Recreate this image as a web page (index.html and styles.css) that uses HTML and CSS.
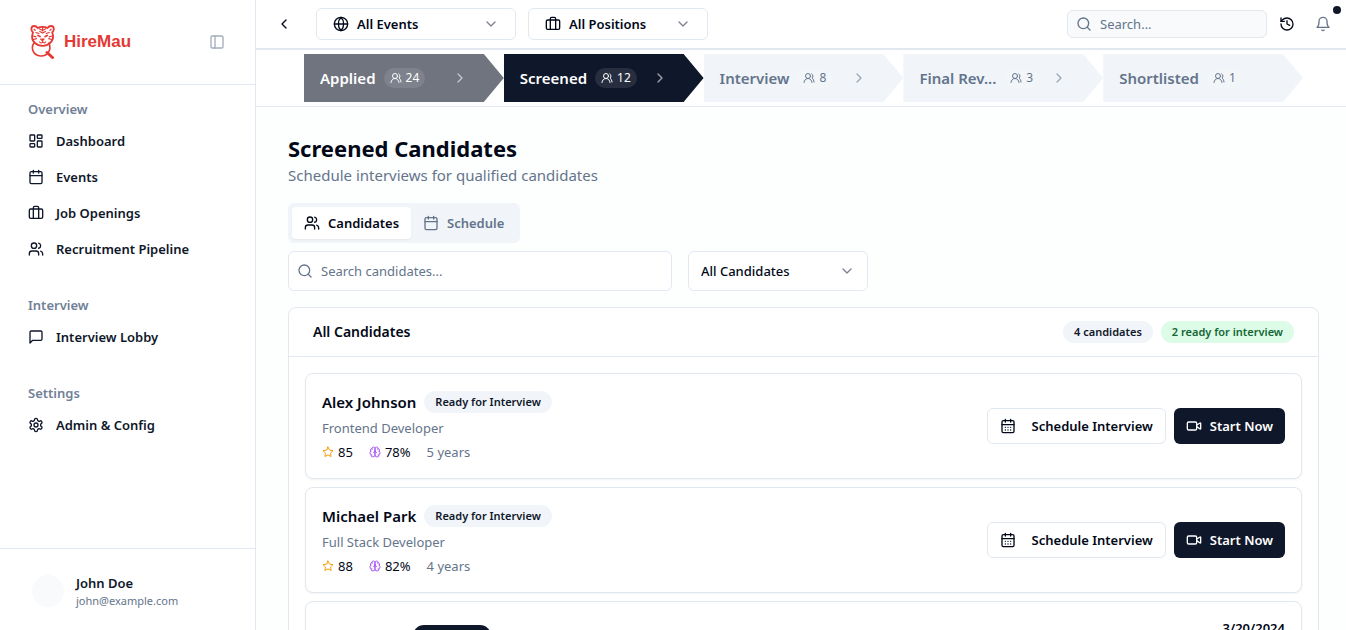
FILE: index.html
```html
<!DOCTYPE html>
<html lang="en">
<head>
<meta charset="utf-8">
<title>HireMau</title>
<link rel="stylesheet" href="styles.css">
</head>
<body>
<svg class="sprite" aria-hidden="true">
  <symbol id="users" viewBox="0 0 24 24"><path d="M16 21v-2a4 4 0 0 0-4-4H6a4 4 0 0 0-4 4v2"/><circle cx="9" cy="7" r="4"/><path d="M22 21v-2a4 4 0 0 0-3-3.87M16 3.13a4 4 0 0 1 0 7.75"/></symbol>
  <symbol id="users-round" viewBox="0 0 24 24"><path d="M18 21a8 8 0 0 0-16 0"/><circle cx="10" cy="8" r="5"/><path d="M22 20c0-3.37-2-6.5-4-8a5 5 0 0 0-.45-8.3"/></symbol>
  <symbol id="calendar" viewBox="0 0 24 24"><path d="M8 2v4M16 2v4M3 10h18"/><rect x="3" y="4" width="18" height="18" rx="2"/></symbol>
  <symbol id="calendar-days" viewBox="0 0 24 24"><path d="M8 2v4M16 2v4M3 10h18M8 14h.01M12 14h.01M16 14h.01M8 18h.01M12 18h.01M16 18h.01"/><rect x="3" y="4" width="18" height="18" rx="2"/></symbol>
  <symbol id="briefcase" viewBox="0 0 24 24"><path d="M16 20V4a2 2 0 0 0-2-2h-4a2 2 0 0 0-2 2v16"/><rect x="2" y="6" width="20" height="14" rx="2"/></symbol>
  <symbol id="dashboard" viewBox="0 0 24 24"><rect x="3" y="3" width="7" height="9" rx="1"/><rect x="14" y="3" width="7" height="5" rx="1"/><rect x="14" y="12" width="7" height="9" rx="1"/><rect x="3" y="16" width="7" height="5" rx="1"/></symbol>
  <symbol id="message" viewBox="0 0 24 24"><path d="M21 15a2 2 0 0 1-2 2H7l-4 4V5a2 2 0 0 1 2-2h14a2 2 0 0 1 2 2z"/></symbol>
  <symbol id="settings" viewBox="0 0 24 24"><path d="M12.22 2h-.44a2 2 0 0 0-2 2v.18a2 2 0 0 1-1 1.73l-.43.25a2 2 0 0 1-2 0l-.15-.08a2 2 0 0 0-2.73.73l-.22.38a2 2 0 0 0 .73 2.73l.15.1a2 2 0 0 1 1 1.72v.51a2 2 0 0 1-1 1.74l-.15.09a2 2 0 0 0-.73 2.73l.22.38a2 2 0 0 0 2.73.73l.15-.08a2 2 0 0 1 2 0l.43.25a2 2 0 0 1 1 1.73V20a2 2 0 0 0 2 2h.44a2 2 0 0 0 2-2v-.18a2 2 0 0 1 1-1.73l.43-.25a2 2 0 0 1 2 0l.15.08a2 2 0 0 0 2.73-.73l.22-.39a2 2 0 0 0-.73-2.73l-.15-.08a2 2 0 0 1-1-1.74v-.5a2 2 0 0 1 1-1.74l.15-.09a2 2 0 0 0 .73-2.73l-.22-.38a2 2 0 0 0-2.73-.73l-.15.08a2 2 0 0 1-2 0l-.43-.25a2 2 0 0 1-1-1.73V4a2 2 0 0 0-2-2z"/><circle cx="12" cy="12" r="3"/></symbol>
  <symbol id="panel" viewBox="0 0 24 24"><rect x="3" y="3" width="18" height="18" rx="2"/><path d="M9 3v18"/></symbol>
  <symbol id="left" viewBox="0 0 24 24"><path d="m15 18-6-6 6-6"/></symbol>
  <symbol id="right" viewBox="0 0 24 24"><path d="m9 18 6-6-6-6"/></symbol>
  <symbol id="down" viewBox="0 0 24 24"><path d="m6 9 6 6 6-6"/></symbol>
  <symbol id="globe" viewBox="0 0 24 24"><circle cx="12" cy="12" r="10"/><path d="M12 2a14.5 14.5 0 0 0 0 20 14.5 14.5 0 0 0 0-20M2 12h20"/></symbol>
  <symbol id="search" viewBox="0 0 24 24"><circle cx="11" cy="11" r="8"/><path d="m21 21-4.3-4.3"/></symbol>
  <symbol id="history" viewBox="0 0 24 24"><path d="M3 12a9 9 0 1 0 9-9 9.75 9.75 0 0 0-6.74 2.74L3 8"/><path d="M3 3v5h5M12 7v5l4 2"/></symbol>
  <symbol id="bell" viewBox="0 0 24 24"><path d="M6 8a6 6 0 0 1 12 0c0 7 3 9 3 9H3s3-2 3-9M10.3 21a1.94 1.94 0 0 0 3.4 0"/></symbol>
  <symbol id="star" viewBox="0 0 24 24"><path d="M12 2l3.09 6.26L22 9.27l-5 4.87 1.18 6.88L12 17.77l-6.18 3.25L7 14.14 2 9.27l6.91-1.01z"/></symbol>
  <symbol id="brain" viewBox="0 0 24 24"><path d="M12 5a3 3 0 1 0-5.997.125 4 4 0 0 0-2.526 5.77 4 4 0 0 0 .556 6.588A4 4 0 1 0 12 18Z"/><path d="M12 5a3 3 0 1 1 5.997.125 4 4 0 0 1 2.526 5.77 4 4 0 0 1-.556 6.588A4 4 0 1 1 12 18Z"/><path d="M15 13a4.5 4.5 0 0 1-3-4 4.5 4.5 0 0 1-3 4M17.599 6.5a3 3 0 0 0 .399-1.375M6.003 5.125A3 3 0 0 0 6.401 6.5M3.477 10.896a4 4 0 0 1 .585-.396M19.938 10.5a4 4 0 0 1 .585.396M6 18a4 4 0 0 1-1.967-.516M19.967 17.484A4 4 0 0 1 18 18"/></symbol>
  <symbol id="video" viewBox="0 0 24 24"><path d="m16 13 5.223 3.482a.5.5 0 0 0 .777-.416V7.87a.5.5 0 0 0-.752-.432L16 10.5"/><rect x="2" y="6" width="14" height="12" rx="2"/></symbol>
</svg>

<div class="app">
  <aside class="sidebar">
    <div class="brand">
      <svg class="brand-mark" viewBox="0 0 26 34" aria-hidden="true">
        <path d="M4 18C.5 23 3 30.500 10.500 31c8 .3 11-7 8.500-13" stroke-width="1.600"/>
        <path d="M17 27.500l5.500 5" stroke-width="3"/>
        <path d="M3 7.500C.5 5 1 1 4 1c2 0 3 1 3.700 2C10 1.500 15 1.500 17.500 3c.7-1 1.700-2 3.700-2 3 0 3.500 4 1 6.500 1.500 4 .8 8-2.200 10.500-2 2-4.500 2.800-7.400 2.800S7 20 5 18C2 15.500 1.500 11.500 3 7.500z" stroke-width="1.800"/>
        <path d="M12.600 2v4M9.300 3.800l3.300 1.700 3.300-1.700M9.800 6.500l2.800 1.500 2.800-1.500M3 11l3 .8M3.500 14.500l3-.8M22.200 11l-3 .8M21.700 14.500l-3-.8M6 7.500l3 1M19.200 7.500l-3 1M12.600 15.500v1.500M9.500 17c1 1.300 2.300 1 3.100 0 .8 1 2.100 1.300 3.100 0M4 4.300l1.200 1M21.200 4.300l-1.200 1" stroke-width="1.200"/>
        <path d="M8 10.500l2 1M17.200 10.500l-2 1" stroke-width="1.800"/>
        <path d="M10.800 14h3.600l-1.800 1.800z" stroke-width="1" fill="currentColor"/>
      </svg>
      <span class="brand-name">HireMau</span>
      <button class="icon-btn panel-btn" aria-label="Toggle sidebar"><svg class="icon"><use href="#panel"/></svg></button>
    </div>
    <nav class="nav">
      <section class="nav-group">
        <h2 class="nav-label">Overview</h2>
        <a class="nav-item" href="#"><svg class="icon"><use href="#dashboard"/></svg>Dashboard</a>
        <a class="nav-item" href="#"><svg class="icon"><use href="#calendar"/></svg>Events</a>
        <a class="nav-item" href="#"><svg class="icon"><use href="#briefcase"/></svg>Job Openings</a>
        <a class="nav-item" href="#"><svg class="icon"><use href="#users"/></svg>Recruitment Pipeline</a>
      </section>
      <section class="nav-group">
        <h2 class="nav-label">Interview</h2>
        <a class="nav-item" href="#"><svg class="icon"><use href="#message"/></svg>Interview Lobby</a>
      </section>
      <section class="nav-group">
        <h2 class="nav-label">Settings</h2>
        <a class="nav-item" href="#"><svg class="icon"><use href="#settings"/></svg>Admin &amp; Config</a>
      </section>
    </nav>
    <div class="profile">
      <span class="avatar"></span>
      <div>
        <div class="profile-name">John Doe</div>
        <div class="profile-mail">john@example.com</div>
      </div>
    </div>
  </aside>

  <div class="content">
    <header class="topbar">
      <button class="icon-btn back-btn" aria-label="Back"><svg class="icon"><use href="#left"/></svg></button>
      <div class="select select-events">
        <svg class="icon"><use href="#globe"/></svg>
        <select aria-label="Event"><option>All Events</option></select>
        <svg class="icon chevron"><use href="#down"/></svg>
      </div>
      <div class="select select-positions">
        <svg class="icon"><use href="#briefcase"/></svg>
        <select aria-label="Position"><option>All Positions</option></select>
        <svg class="icon chevron"><use href="#down"/></svg>
      </div>
      <div class="top-actions">
        <label class="field top-search"><svg class="icon"><use href="#search"/></svg><input type="search" placeholder="Search..." aria-label="Search"></label>
        <button class="icon-btn" aria-label="History"><svg class="icon"><use href="#history"/></svg></button>
        <button class="icon-btn bell-btn" aria-label="Notifications"><svg class="icon"><use href="#bell"/></svg><span class="dot"></span></button>
      </div>
    </header>

    <nav class="pipeline" aria-label="Pipeline stages">
      <a class="stage stage-done" href="#"><span class="stage-name">Applied</span><span class="count"><svg class="icon-sm"><use href="#users-round"/></svg>24</span><svg class="icon stage-next"><use href="#right"/></svg></a>
      <a class="stage stage-active" href="#"><span class="stage-name">Screened</span><span class="count"><svg class="icon-sm"><use href="#users-round"/></svg>12</span><svg class="icon stage-next"><use href="#right"/></svg></a>
      <a class="stage" href="#"><span class="stage-name">Interview</span><span class="count"><svg class="icon-sm"><use href="#users-round"/></svg>8</span><svg class="icon stage-next"><use href="#right"/></svg></a>
      <a class="stage" href="#"><span class="stage-name">Final Rev...</span><span class="count"><svg class="icon-sm"><use href="#users-round"/></svg>3</span><svg class="icon stage-next"><use href="#right"/></svg></a>
      <a class="stage" href="#"><span class="stage-name">Shortlisted</span><span class="count"><svg class="icon-sm"><use href="#users-round"/></svg>1</span></a>
    </nav>

    <main class="main">
      <h1 class="title">Screened Candidates</h1>
      <p class="subtitle">Schedule interviews for qualified candidates</p>

      <div class="tabs" role="tablist">
        <button class="tab tab-active" role="tab" aria-selected="true"><svg class="icon"><use href="#users"/></svg>Candidates</button>
        <button class="tab" role="tab" aria-selected="false"><svg class="icon"><use href="#calendar"/></svg>Schedule</button>
      </div>

      <div class="filters">
        <label class="field candidate-search"><svg class="icon"><use href="#search"/></svg><input type="search" placeholder="Search candidates..." aria-label="Search candidates"></label>
        <div class="select select-filter">
          <select aria-label="Filter candidates"><option>All Candidates</option></select>
          <svg class="icon chevron"><use href="#down"/></svg>
        </div>
      </div>

      <section class="panel">
        <div class="panel-head">
          <h2 class="panel-title">All Candidates</h2>
          <span class="badge">4 candidates</span>
          <span class="badge badge-green">2 ready for interview</span>
        </div>
        <div class="list">
          <article class="card">
            <div class="person">
              <div class="person-head"><h3 class="name">Alex Johnson</h3><span class="badge">Ready for Interview</span></div>
              <p class="role">Frontend Developer</p>
              <div class="stats">
                <span class="stat"><svg class="icon-sm star"><use href="#star"/></svg>85</span>
                <span class="stat"><svg class="icon-sm brain"><use href="#brain"/></svg>78%</span>
                <span class="years">5 years</span>
              </div>
            </div>
            <button class="btn btn-outline"><svg class="icon"><use href="#calendar-days"/></svg>Schedule Interview</button>
            <button class="btn btn-dark"><svg class="icon"><use href="#video"/></svg>Start Now</button>
          </article>
          <article class="card">
            <div class="person">
              <div class="person-head"><h3 class="name">Michael Park</h3><span class="badge">Ready for Interview</span></div>
              <p class="role">Full Stack Developer</p>
              <div class="stats">
                <span class="stat"><svg class="icon-sm star"><use href="#star"/></svg>88</span>
                <span class="stat"><svg class="icon-sm brain"><use href="#brain"/></svg>82%</span>
                <span class="years">4 years</span>
              </div>
            </div>
            <button class="btn btn-outline"><svg class="icon"><use href="#calendar-days"/></svg>Schedule Interview</button>
            <button class="btn btn-dark"><svg class="icon"><use href="#video"/></svg>Start Now</button>
          </article>
          <article class="card card-scheduled">
            <span class="badge badge-dark"></span>
            <time class="date">3/20/2024</time>
          </article>
        </div>
      </section>
    </main>
  </div>
</div>
</body>
</html>
```
FILE: styles.css
```css
* { box-sizing: border-box; }

:root {
  --ink: #020817;
  --navy: #0f172a;
  --muted: #64748b;
  --line: #e2e8f0;
  --soft: #f1f5f9;
}

body {
  margin: 0;
  background: #fff;
  color: var(--ink);
  font-family: "Noto Sans", "Open Sans", sans-serif;
  font-size: 13px;
  line-height: 20px;
}

h1, h2, h3, p { margin: 0; }
a { color: inherit; text-decoration: none; }
button, input, select { font: inherit; color: inherit; }
button { cursor: pointer; }

.sprite { display: none; }

.icon, .icon-sm, .brand-mark {
  flex: none;
  fill: none;
  stroke: currentColor;
  stroke-width: 2;
  stroke-linecap: round;
  stroke-linejoin: round;
}
.icon { width: 16px; height: 16px; }
.icon-sm { width: 12px; height: 12px; }

.app { display: flex; height: 100vh; overflow: hidden; }

/* Sidebar */
.sidebar {
  display: flex;
  flex-direction: column;
  flex: none;
  width: 256px;
  border-right: 1px solid var(--line);
}
.brand {
  display: flex;
  align-items: center;
  height: 85px;
  padding: 0 24px 0 30px;
  border-bottom: 1px solid var(--line);
}
.brand-mark { width: 26px; height: 34px; color: #e53935; }
.brand-name {
  margin-left: 8px;
  color: #e53935;
  font: bold 17px/24px "Liberation Sans", Arial, sans-serif;
}
.icon-btn {
  position: relative;
  display: flex;
  align-items: center;
  justify-content: center;
  width: 36px;
  height: 36px;
  padding: 0;
  border: 0;
  background: none;
}
.panel-btn { width: 28px; margin-left: auto; color: #a3adb9; }
.nav {
  display: flex;
  flex: 1;
  flex-direction: column;
  gap: 24px;
  padding: 8px 20px;
}
.nav-group { display: flex; flex-direction: column; }
.nav-label {
  padding: 0 8px;
  color: #718096;
  font-size: 13px;
  font-weight: 600;
  line-height: 32px;
}
.nav-item {
  display: flex;
  align-items: center;
  gap: 12px;
  height: 32px;
  padding: 0 8px;
  color: var(--navy);
  font-weight: 600;
}
.nav-item + .nav-item { margin-top: 4px; }
.profile {
  display: flex;
  align-items: center;
  gap: 12px;
  height: 82px;
  padding: 2px 32px 0;
  border-top: 1px solid var(--line);
}
.avatar { width: 32px; height: 32px; border-radius: 50%; background: #f8fafc; }
.profile-name { color: var(--navy); font-weight: 600; }
.profile-mail { color: var(--muted); font-size: 11px; line-height: 16px; }

/* Top bar */
.content { display: flex; flex: 1; flex-direction: column; min-width: 0; }
.topbar {
  display: flex;
  flex: none;
  align-items: center;
  gap: 12px;
  height: 50px;
  padding: 0 5px 0 8px;
  border-bottom: 2px solid var(--line);
}
.back-btn { width: 40px; }
.select {
  display: flex;
  align-items: center;
  gap: 8px;
  height: 32px;
  padding: 0 16px;
  border: 1px solid var(--line);
  border-radius: 6px;
  background: #fff;
  font-weight: 600;
}
.select select {
  flex: 1;
  min-width: 0;
  padding: 0;
  border: 0;
  background: none;
  appearance: none;
  outline: 0;
}
.chevron { color: #7d8491; }
.select-events { width: 200px; }
.select-positions { width: 180px; }
.top-actions { display: flex; align-items: center; margin-left: auto; }
.field {
  display: flex;
  align-items: center;
  gap: 8px;
  padding: 0 8px;
  border: 1px solid var(--line);
  border-radius: 6px;
  color: var(--muted);
}
.field input {
  flex: 1;
  min-width: 0;
  padding: 0;
  border: 0;
  background: none;
  outline: 0;
}
.field input::placeholder { color: var(--muted); opacity: 1; }
.top-search { width: 200px; height: 28px; margin-right: 2px; background: #f8fafc; }
.bell-btn { color: var(--muted); }
.dot {
  position: absolute;
  top: 0;
  right: 0;
  width: 8px;
  height: 8px;
  border-radius: 50%;
  background: var(--navy);
}

/* Pipeline */
.pipeline {
  display: flex;
  flex: none;
  padding: 4px 43px 4px 48px;
  border-bottom: 1px solid var(--line);
}
.stage {
  display: flex;
  flex: 1;
  align-items: center;
  gap: 8px;
  height: 48px;
  padding: 0 36px 0 16px;
  background: var(--soft);
  clip-path: polygon(0 0, 90% 0, 100% 50%, 90% 100%, 0 100%);
  color: var(--muted);
}
.stage-name { font-size: 15px; font-weight: 600; white-space: nowrap; }
.count {
  display: flex;
  align-items: center;
  gap: 4px;
  height: 20px;
  padding: 0 6px;
  border-radius: 10px;
  background: rgba(255, 255, 255, .1);
  font-size: 12px;
}
.stage-next { margin-left: auto; opacity: .6; }
.stage-done { background: #6f747f; color: #fff; }
.stage-active { background: var(--navy); color: #fff; }

/* Main */
.main {
  flex: 1;
  min-height: 0;
  padding: 24px 27px 0 32px;
  overflow: hidden;
  background: #fdfefe;
}
.title { font-size: 22px; font-weight: 700; line-height: 34px; }
.subtitle { color: var(--muted); font-size: 15px; line-height: 20px; }
.tabs {
  display: flex;
  width: max-content;
  margin-top: 18px;
  padding: 4px;
  border-radius: 6px;
  background: var(--soft);
}
.tab {
  display: flex;
  align-items: center;
  gap: 8px;
  height: 32px;
  padding: 0 12px;
  border: 0;
  border-radius: 4px;
  background: none;
  color: var(--muted);
  font-weight: 600;
}
.tab-active { background: #fff; color: var(--ink); box-shadow: 0 1px 2px rgba(0, 0, 0, .05); }
.filters { display: flex; gap: 16px; margin-top: 8px; }
.candidate-search { width: 384px; height: 40px; background: #fff; }
.select-filter { width: 180px; height: 40px; padding: 0 12px; font-weight: 500; }

.panel {
  margin-top: 16px;
  border: 1px solid var(--line);
  border-radius: 8px;
  background: #fff;
}
.panel-head {
  display: flex;
  align-items: center;
  gap: 8px;
  height: 49px;
  padding: 0 24px;
  border-bottom: 1px solid var(--line);
}
.panel-title { margin-right: auto; font-size: 14px; font-weight: 600; }
.badge {
  height: 22px;
  padding: 0 11px;
  border-radius: 11px;
  background: var(--soft);
  color: var(--navy);
  font-size: 11px;
  font-weight: 600;
  line-height: 22px;
  white-space: nowrap;
}
.badge-green { background: #dcfce7; color: #166534; }
.list { display: flex; flex-direction: column; gap: 8px; padding: 16px; }
.card {
  display: flex;
  align-items: center;
  gap: 8px;
  padding: 16px;
  border: 1px solid var(--line);
  border-radius: 8px;
  background: #fff;
  box-shadow: 0 1px 2px rgba(0, 0, 0, .05);
}
.person { display: flex; flex: 1; flex-direction: column; gap: 4px; }
.person-head { display: flex; align-items: center; gap: 8px; }
.name { font-size: 15px; font-weight: 600; line-height: 24px; }
.role, .years { color: var(--muted); }
.stats { display: flex; gap: 16px; }
.stat { display: flex; align-items: center; gap: 4px; }
.star { color: #f59e0b; }
.brain { color: #a855f7; }
.btn {
  display: flex;
  align-items: center;
  gap: 8px;
  height: 36px;
  padding: 0 12px;
  border: 0;
  border-radius: 6px;
  font-weight: 600;
  white-space: nowrap;
}
.btn-outline { gap: 16px; border: 1px solid var(--line); background: #fff; }
.btn-dark { background: var(--navy); color: #fff; }
.card-scheduled { align-items: flex-start; justify-content: space-between; min-height: 118px; }
.badge-dark { width: 78px; margin: 7px 0 0 91px; background: var(--navy); }
.date { font-weight: 600; }
```
